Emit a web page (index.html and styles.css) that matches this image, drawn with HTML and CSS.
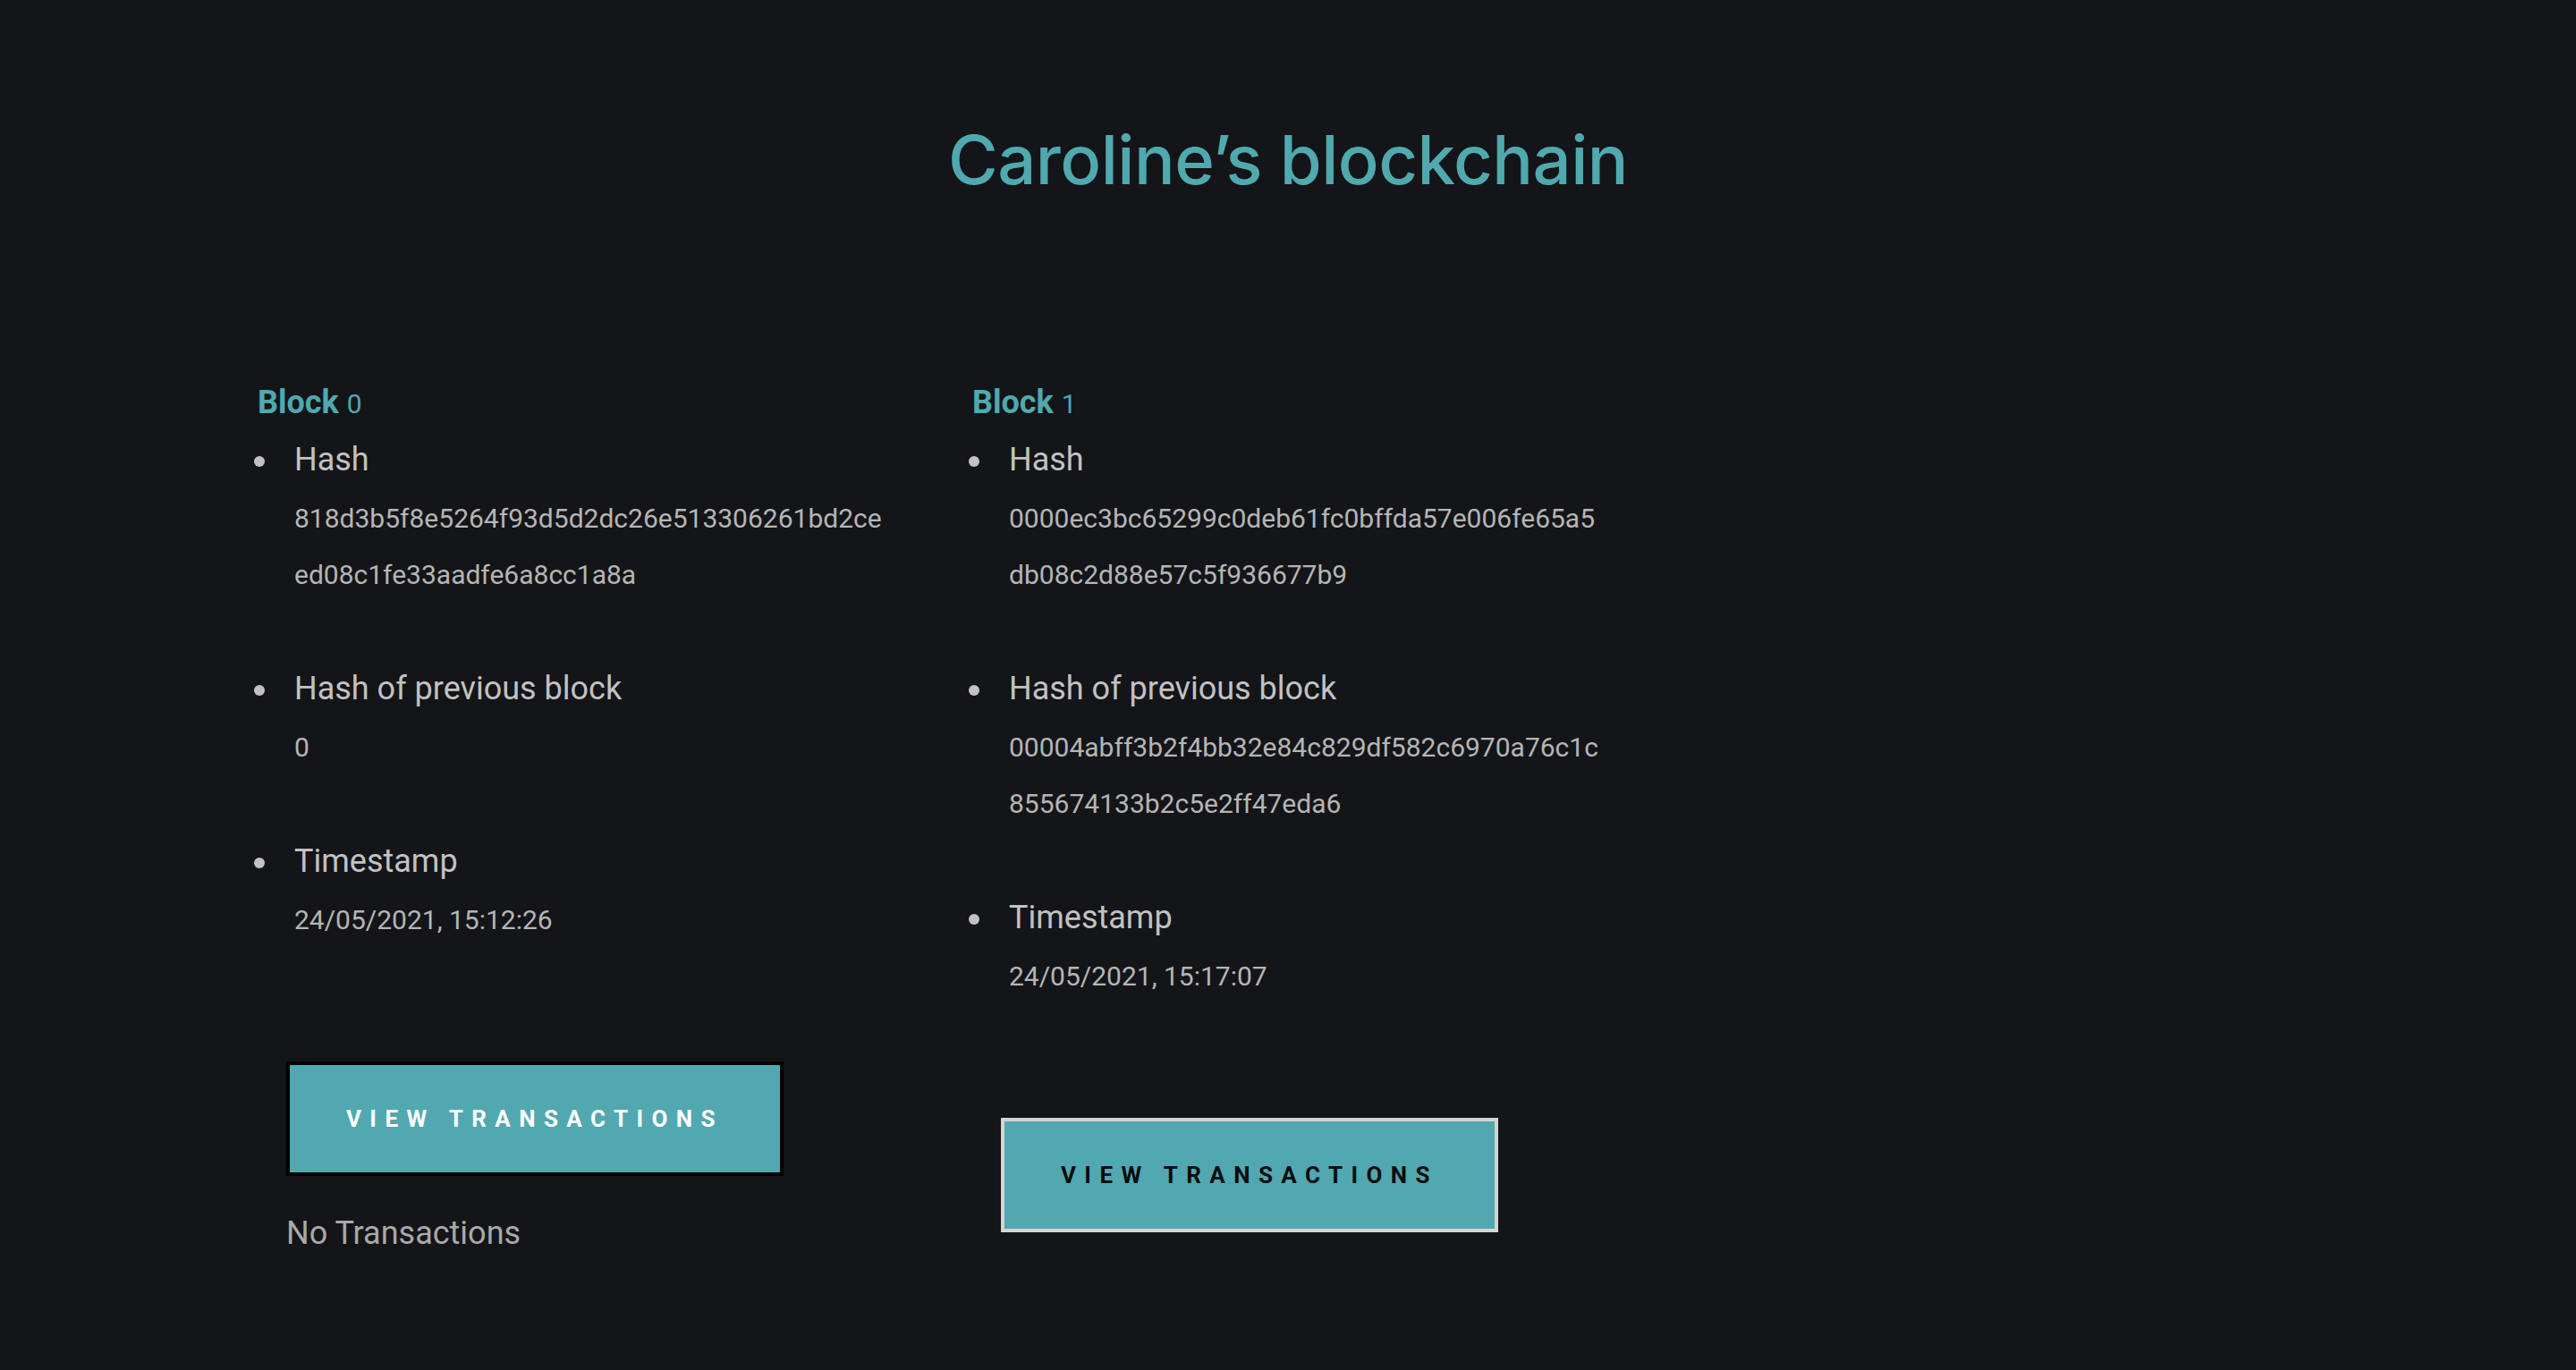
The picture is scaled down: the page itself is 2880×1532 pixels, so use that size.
FILE: index.html
```html
<!DOCTYPE html>
<html lang="en">
<head>
<meta charset="utf-8">
<title>Caroline’s blockchain</title>
<link rel="stylesheet" href="styles.css">
</head>
<body>
<main class="page">
  <h1 class="title">Caroline’s blockchain</h1>
  <section class="chain">
    <article class="block">
      <h2 class="block-head"><span class="block-word">Block</span> <span class="block-num">0</span></h2>
      <ul class="fields">
        <li class="field">
          <div class="field-body">
            <div class="label">Hash</div>
            <p class="value">818d3b5f8e5264f93d5d2dc26e513306261bd2ceed08c1fe33aadfe6a8cc1a8a</p>
          </div>
        </li>
        <li class="field">
          <div class="field-body">
            <div class="label">Hash of previous block</div>
            <p class="value">0</p>
          </div>
        </li>
        <li class="field">
          <div class="field-body">
            <div class="label">Timestamp</div>
            <p class="value">24/05/2021, 15:12:26</p>
          </div>
        </li>
      </ul>
      <div class="actions">
        <button class="btn btn-active" type="button">View transactions</button>
        <p class="empty">No Transactions</p>
      </div>
    </article>
    <article class="block">
      <h2 class="block-head"><span class="block-word">Block</span> <span class="block-num">1</span></h2>
      <ul class="fields">
        <li class="field">
          <div class="field-body">
            <div class="label">Hash</div>
            <p class="value">0000ec3bc65299c0deb61fc0bffda57e006fe65a5db08c2d88e57c5f936677b9</p>
          </div>
        </li>
        <li class="field">
          <div class="field-body">
            <div class="label">Hash of previous block</div>
            <p class="value">00004abff3b2f4bb32e84c829df582c6970a76c1c855674133b2c5e2ff47eda6</p>
          </div>
        </li>
        <li class="field">
          <div class="field-body">
            <div class="label">Timestamp</div>
            <p class="value">24/05/2021, 15:17:07</p>
          </div>
        </li>
      </ul>
      <div class="actions">
        <button class="btn btn-idle" type="button">View transactions</button>
      </div>
    </article>
  </section>
</main>
</body>
</html>
```

FILE: styles.css
```css
html, body {
  margin: 0;
  padding: 0;
  background: #141518;
}

body {
  font-family: Roboto, "Liberation Sans", sans-serif;
  color: #c2c2c2;
  min-height: 1532px;
}

.page {
  padding-top: 132px;
}

.title {
  margin: 0;
  text-align: center;
  font-family: Inter, "Noto Sans", sans-serif;
  font-weight: 500;
  font-size: 76px;
  line-height: 92px;
  letter-spacing: -0.5px;
  color: #4fa9af;
}

.chain {
  display: flex;
  align-items: flex-start;
  margin-top: 202px;
  padding-left: 288px;
}

.block {
  width: 799px;
  flex: none;
}

.block-head {
  margin: 0 0 14px 0;
  font-size: 36px;
  line-height: 48px;
  color: #4fa9af;
}

.block-word {
  font-weight: 700;
}

.block-num {
  font-weight: 400;
  font-size: 30px;
}

.fields {
  list-style: none;
  margin: 0;
  padding: 0;
  display: flex;
  flex-direction: column;
  gap: 72px;
}

.field {
  display: flex;
  align-items: flex-start;
}

.field::before {
  content: "";
  flex: none;
  width: 12px;
  height: 12px;
  border-radius: 50%;
  background: #c2c2c2;
  margin: 20px 33px 0 -4px;
}

.label {
  font-size: 36px;
  line-height: 48px;
  color: #c2c2c2;
}

.value {
  margin: 10px 0 0 0;
  width: 664px;
  font-size: 30px;
  line-height: 63px;
  color: #b5b5b5;
  word-break: break-all;
}

.actions {
  margin-top: 127px;
  padding-left: 32px;
}

.btn {
  display: flex;
  align-items: center;
  justify-content: center;
  box-sizing: border-box;
  width: 556px;
  height: 128px;
  padding: 0;
  background: #51a8b0;
  font-family: Roboto, "Liberation Sans", sans-serif;
  font-weight: 700;
  font-size: 26px;
  letter-spacing: 9.4px;
  text-transform: uppercase;
  cursor: pointer;
}

.btn-active {
  border: 4px solid #000;
  color: #ffffff;
}

.btn-idle {
  border: 4px solid #d4d4d4;
  color: #0b0c0d;
}

.empty {
  margin: 40px 0 0 0;
  font-size: 36px;
  line-height: 48px;
  color: #a9a9a9;
}
```
